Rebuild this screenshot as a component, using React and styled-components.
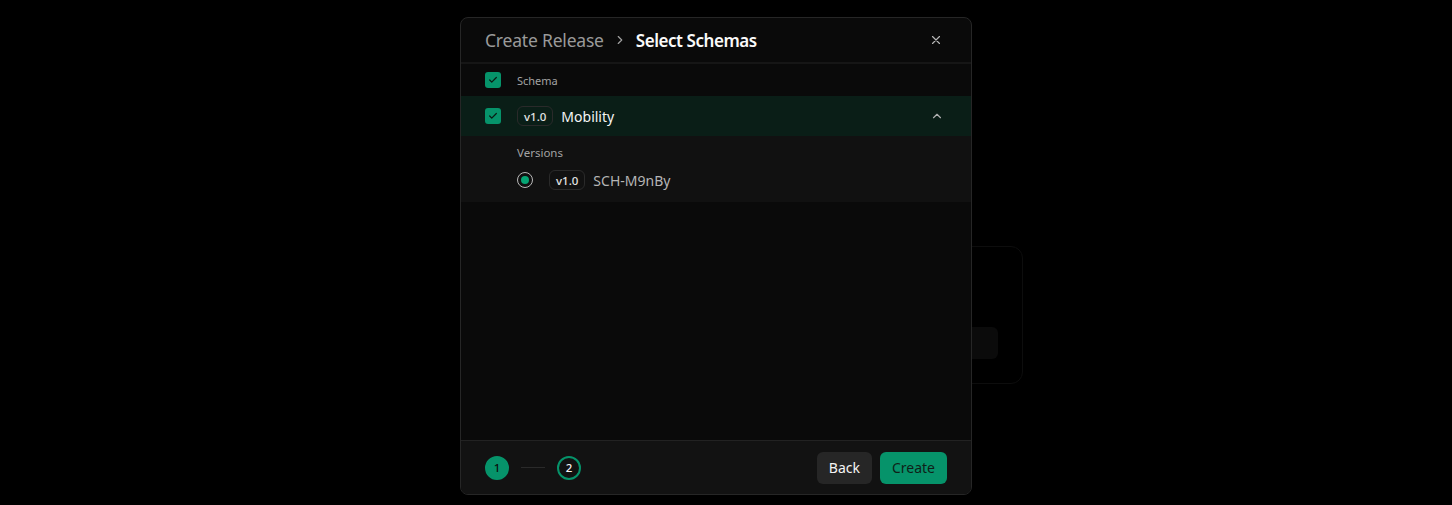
import React from 'react';
import styled, { createGlobalStyle } from 'styled-components';

const GlobalStyle = createGlobalStyle`
  html, body { margin: 0; padding: 0; background: #000; }
  body { font-family: "Noto Sans", "DejaVu Sans", sans-serif; color: #ededed; }
  * { box-sizing: border-box; }
`;

const Page = styled.div`
  position: relative;
  width: 1452px;
  height: 505px;
  overflow: hidden;
  background: #000;
`;

const BackCard = styled.div`
  position: absolute;
  left: 640px;
  top: 246px;
  width: 383px;
  height: 138px;
  border: 1px solid #0d0d0d;
  border-radius: 12px;
  padding: 80px 24px 0 24px;
`;

const BackField = styled.div`
  height: 32px;
  border-radius: 6px;
  background: #0b0b0b;
`;

const Modal = styled.div`
  position: absolute;
  left: 460px;
  top: 17px;
  width: 512px;
  height: 478px;
  display: flex;
  flex-direction: column;
  background: #0a0a0a;
  border: 1px solid #262626;
  border-radius: 8px;
  overflow: hidden;
`;

const Header = styled.div`
  height: 46px;
  display: flex;
  align-items: center;
  padding: 0 24px;
  border-bottom: 2px solid #161616;
  flex-shrink: 0;
`;

const Crumb = styled.span`
  font-size: ${p => (p.$active ? '17px' : '17.5px')};
  font-weight: ${p => (p.$active ? 600 : 400)};
  color: ${p => (p.$active ? '#fafafa' : '#9a9a9a')};
  letter-spacing: ${p => (p.$active ? '-0.45px' : '-0.2px')};
`;

const Sep = styled.span`
  display: flex;
  margin: 0 9px 0 9px;
  color: #a0a0a0;
`;

const Close = styled.button`
  margin-left: auto;
  margin-right: 4px;
  background: none;
  border: 0;
  padding: 0;
  display: flex;
  color: #b5b5b5;
`;

const Row = styled.div`
  display: flex;
  align-items: center;
  padding: 0 24px;
  height: ${p => p.$h}px;
  background: ${p => p.$bg || 'transparent'};
  flex-shrink: 0;
`;

const Check = styled.span`
  width: 16px;
  height: 16px;
  border-radius: 3px;
  background: #06936a;
  display: flex;
  align-items: center;
  justify-content: center;
  margin-right: 16px;
`;

const ColLabel = styled.span`
  font-size: 11px;
  color: #a3a3a3;
`;

const Badge = styled.span`
  display: inline-flex;
  align-items: center;
  height: 20px;
  padding: 0 6px;
  border: 1px solid #2a2a2a;
  border-radius: 6px;
  font-size: 11.5px;
  font-weight: 500;
  color: #e5e5e5;
  margin-right: 8px;
`;

const Name = styled.span`
  font-size: 14px;
  font-weight: 400;
  color: #f5f5f5;
`;

const Chevron = styled.span`
  margin-left: auto;
  margin-right: 3px;
  display: flex;
  color: #b0b0b0;
`;

const Expanded = styled.div`
  background: #111111;
  padding: 9px 24px 8px 56px;
  display: flex;
  flex-direction: column;
  flex-shrink: 0;
`;

const SubLabel = styled.div`
  font-size: 11.5px;
  color: #a3a3a3;
  margin-bottom: 6px;
`;

const VersionRow = styled.div`
  display: flex;
  align-items: center;
  height: 28px;
`;

const Radio = styled.span`
  width: 16px;
  height: 16px;
  border-radius: 50%;
  border: 1.5px solid #b8b8b8;
  display: flex;
  align-items: center;
  justify-content: center;
  margin-right: 16px;

  &::after {
    content: '';
    width: 8px;
    height: 8px;
    border-radius: 50%;
    background: #06a574;
  }
`;

const VersionId = styled.span`
  font-size: 14px;
  color: #b5b5b5;
`;

const Body = styled.div`
  flex: 1;
`;

const Footer = styled.div`
  height: 54px;
  display: flex;
  align-items: center;
  padding: 0 24px;
  background: #121212;
  border-top: 1px solid #222;
  flex-shrink: 0;
`;

const Step = styled.span`
  width: 24px;
  height: 24px;
  border-radius: 50%;
  display: flex;
  align-items: center;
  justify-content: center;
  font-size: 11.5px;
  font-weight: 500;
  color: ${p => (p.$done ? '#0b0b0b' : '#f5f5f5')};
  background: ${p => (p.$done ? '#06936a' : 'transparent')};
  border: 2px solid #06936a;
`;

const StepLine = styled.span`
  width: 24px;
  height: 1px;
  background: #2a2a2a;
  margin: 0 12px;
`;

const Actions = styled.div`
  margin-left: auto;
  display: flex;
  gap: 8px;
`;

const Button = styled.button`
  height: 32px;
  padding: 0 12px;
  border: 0;
  border-radius: 6px;
  font-family: inherit;
  font-size: 14px;
  font-weight: 400;
  background: ${p => (p.$primary ? '#06936a' : '#262626')};
  color: ${p => (p.$primary ? '#0f1f18' : '#f5f5f5')};
`;

const CheckIcon = () => (
  <svg width="10" height="10" viewBox="0 0 24 24" fill="none" stroke="#0b1b14" strokeWidth="3" strokeLinecap="round" strokeLinejoin="round">
    <path d="M20 6 9 17l-5-5" />
  </svg>
);

export default function App() {
  return (
    <Page>
      <GlobalStyle />
      <BackCard>
        <BackField />
      </BackCard>
      <Modal>
        <Header>
          <Crumb>Create Release</Crumb>
          <Sep>
            <svg width="14" height="14" viewBox="0 0 24 24" fill="none" stroke="currentColor" strokeWidth="2" strokeLinecap="round" strokeLinejoin="round">
              <path d="m9 18 6-6-6-6" />
            </svg>
          </Sep>
          <Crumb $active>Select Schemas</Crumb>
          <Close>
            <svg width="14" height="14" viewBox="0 0 24 24" fill="none" stroke="currentColor" strokeWidth="2" strokeLinecap="round" strokeLinejoin="round">
              <path d="M18 6 6 18M6 6l12 12" />
            </svg>
          </Close>
        </Header>
        <Row $h={32}>
          <Check><CheckIcon /></Check>
          <ColLabel>Schema</ColLabel>
        </Row>
        <Row $h={40} $bg="#0a1e17">
          <Check><CheckIcon /></Check>
          <Badge>v1.0</Badge>
          <Name>Mobility</Name>
          <Chevron>
            <svg width="14" height="14" viewBox="0 0 24 24" fill="none" stroke="currentColor" strokeWidth="2" strokeLinecap="round" strokeLinejoin="round">
              <path d="m18 15-6-6-6 6" />
            </svg>
          </Chevron>
        </Row>
        <Expanded>
          <SubLabel>Versions</SubLabel>
          <VersionRow>
            <Radio />
            <Badge>v1.0</Badge>
            <VersionId>SCH-M9nBy</VersionId>
          </VersionRow>
        </Expanded>
        <Body />
        <Footer>
          <Step $done>1</Step>
          <StepLine />
          <Step>2</Step>
          <Actions>
            <Button>Back</Button>
            <Button $primary>Create</Button>
          </Actions>
        </Footer>
      </Modal>
    </Page>
  );
}
